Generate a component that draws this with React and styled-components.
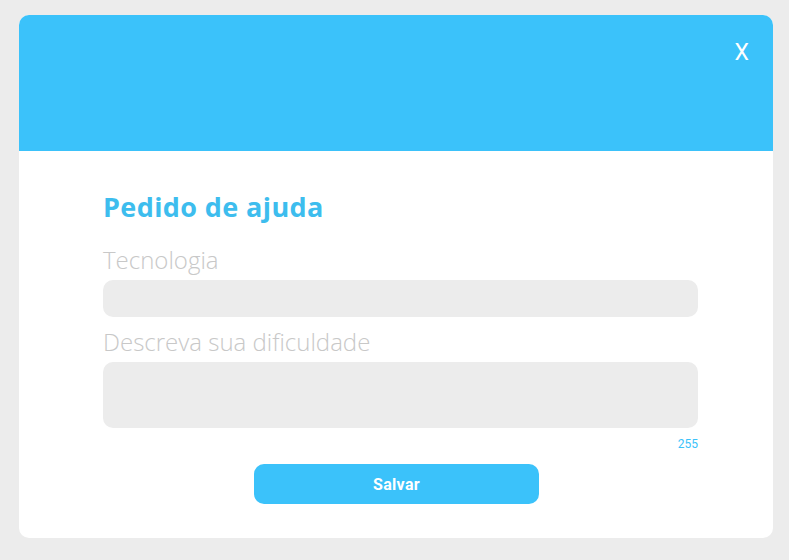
import React from "react";
import styled, { createGlobalStyle } from "styled-components";

const GlobalStyle = createGlobalStyle`
  body {
    margin: 0;
    background-color: #ececec;
    font-family: "Open Sans", "Lato", sans-serif;
  }
`;

const Page = styled.div`
  width: 789px;
  height: 560px;
  box-sizing: border-box;
  padding: 15px 16px 0 19px;
`;

const Modal = styled.div`
  width: 754px;
  height: 523px;
  background-color: #ffffff;
  border-radius: 10px;
  overflow: hidden;
  display: flex;
  flex-direction: column;
`;

const Header = styled.div`
  height: 136px;
  background-color: #3bc2fa;
  display: flex;
  justify-content: flex-end;
  align-items: flex-start;
  padding: 24px 24px 0 0;
  box-sizing: border-box;
`;

const CloseBtn = styled.button`
  background: none;
  border: none;
  padding: 0;
  color: #ffffff;
  font-family: "Roboto", sans-serif;
  font-size: 23px;
  font-weight: 400;
  cursor: pointer;
`;

const Body = styled.div`
  padding: 36px 0 0 84px;
  width: 595px;
  display: flex;
  flex-direction: column;
`;

const Title = styled.h2`
  margin: 0 0 18px 0;
  font-size: 27px;
  font-weight: 700;
  letter-spacing: 0.4px;
  color: #3dbdee;
  line-height: 40px;
`;

const Label = styled.label`
  font-size: 24px;
  font-weight: 300;
  color: #c8c8c8;
  line-height: 30px;
  margin-bottom: 5px;
`;

const Field = styled.div`
  height: ${(p) => p.h}px;
  background-color: #ececec;
  border-radius: 10px;
  margin-bottom: ${(p) => p.mb}px;
`;

const Counter = styled.div`
  text-align: right;
  font-family: "Roboto", sans-serif;
  font-size: 12px;
  color: #3bc2fa;
  margin-top: 9px;
  line-height: 14px;
`;

const SaveBtn = styled.button`
  align-self: flex-start;
  margin: 13px 0 0 151px;
  width: 285px;
  height: 40px;
  border: none;
  border-radius: 10px;
  background-color: #3bc2fa;
  color: #ffffff;
  font-family: "Roboto", sans-serif;
  font-size: 16px;
  font-weight: 700;
  letter-spacing: 0.3px;
  cursor: pointer;
`;

export default function App() {
  return (
    <>
      <GlobalStyle />
      <Page>
        <Modal>
          <Header>
            <CloseBtn>X</CloseBtn>
          </Header>
          <Body>
            <Title>Pedido de ajuda</Title>
            <Label>Tecnologia</Label>
            <Field h={37} mb={10} />
            <Label>Descreva sua dificuldade</Label>
            <Field h={66} mb={0} />
            <Counter>255</Counter>
            <SaveBtn>Salvar</SaveBtn>
          </Body>
        </Modal>
      </Page>
    </>
  );
}
